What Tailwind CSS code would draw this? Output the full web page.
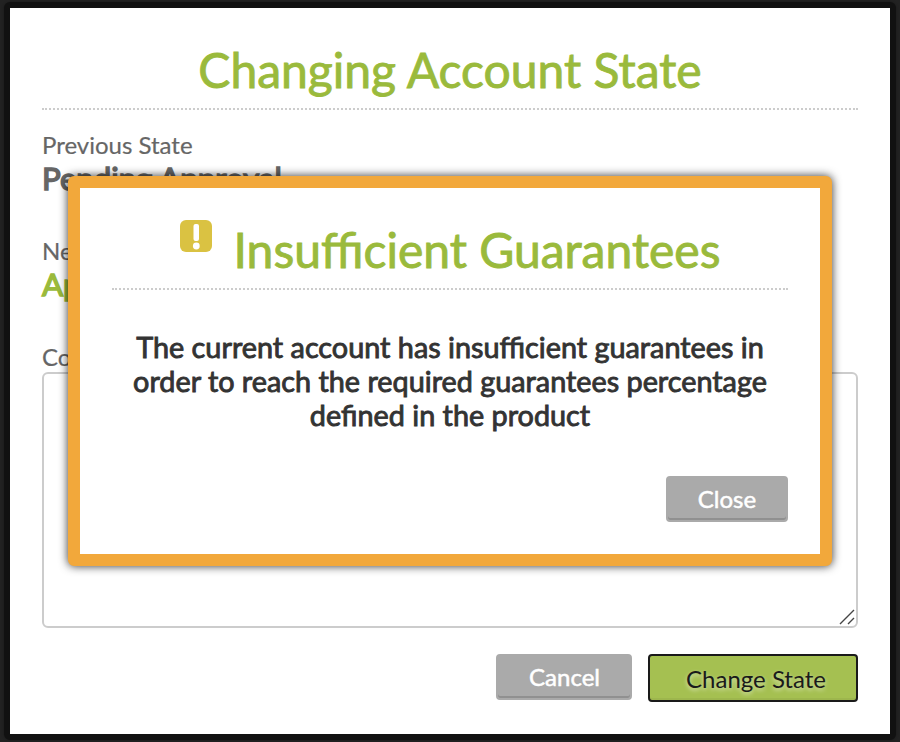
<!DOCTYPE html>
<html lang="en">
<head>
  <meta charset="UTF-8">
  <title>Changing Account State</title>
  <script src="https://cdn.jsdelivr.net/npm/@tailwindcss/browser@4"></script>
  <meta name="viewport" content="width=device-width, initial-scale=1.0">
</head>
<body class="bg-[#222] w-[900px] h-[742px] overflow-hidden px-1 py-0.5 font-['Lato',sans-serif] text-[#666]">

  <!-- account state form -->
  <div class="relative h-[738px] bg-white border-6 border-[#111] rounded-md shadow-[0_0_3px_rgba(0,0,0,0.3)] px-8 pt-8">
    <h1 class="h-[70px] border-b-2 border-dotted border-[#ccc] text-center text-5xl leading-[60px] text-[#9aba3c] [-webkit-text-stroke:0.9px_#9aba3c]">Changing Account State</h1>

    <div class="mt-[18px] text-2xl leading-[34px] [-webkit-text-stroke:0.2px_#666]">Previous State</div>
    <div class="text-[31.2px] leading-8 [-webkit-text-stroke:1.5px_#666]">Pending Approval</div>

    <div class="mt-10 text-2xl leading-[34px] [-webkit-text-stroke:0.2px_#666]">New State</div>
    <div class="text-[31.2px] leading-8 text-[#9aba3c] [-webkit-text-stroke:1.5px_#9aba3c]">Approved</div>

    <div class="mt-10 text-2xl leading-[34px] [-webkit-text-stroke:0.2px_#666]">Comment</div>
    <div class="relative -mt-0.5 h-64 border-2 border-[#ccc] rounded-md">
      <svg class="absolute right-px bottom-px w-4 h-4" viewBox="0 0 16 16" fill="none" stroke="#444" stroke-width="1.4">
        <path d="M1 15L15 1M9 15L15 9"/>
      </svg>
    </div>

    <div class="mt-[26px] flex justify-end gap-4">
      <button class="w-[136px] h-[46px] rounded bg-[#aaa] border-2 border-[#aaa] shadow-[inset_0_-2px_0_#909090] pl-px text-2xl leading-[42px] text-white [-webkit-text-stroke:0.5px_white]">Cancel</button>
      <button class="w-[210px] h-12 rounded bg-[#a5c051] border-2 border-[#1a1a1a] shadow-[inset_0_-2px_0_#9db64d] pl-1.5 text-2xl leading-[46px] text-[#1a1a1a] [text-shadow:0_2px_4px_rgba(255,255,255,0.6)]">Change State</button>
    </div>
  </div>

  <!-- warning dialog -->
  <div class="absolute left-[68px] top-[176px] w-[764px] h-[390px] bg-white border-12 border-[#f2a83b] rounded-md shadow-[0_0_10px_rgba(0,0,0,0.8)] px-8 pt-8">
    <div class="h-[70px] border-b-2 border-dotted border-[#ccc] flex justify-center">
      <svg class="w-8 h-8 mr-[22px]" viewBox="0 0 32 32">
        <rect width="32" height="32" rx="6" fill="#dac242"/>
        <rect x="13.5" y="4" width="5.5" height="17" rx="2" fill="#fff"/>
        <circle cx="16.3" cy="26" r="3.4" fill="#fff"/>
      </svg>
      <h2 class="text-5xl leading-[60px] text-[#9aba3c] [-webkit-text-stroke:0.9px_#9aba3c]">Insufficient Guarantees</h2>
    </div>
    <p class="mt-10 text-center text-[28.8px] leading-[34px] text-[#333] [-webkit-text-stroke:0.9px_#333]">The current account has insufficient guarantees in<br>order to reach the required guarantees percentage<br>defined in the product</p>
    <div class="mt-11 flex justify-end">
      <button class="w-[122px] h-[46px] rounded bg-[#aaa] border-2 border-[#aaa] shadow-[inset_0_-2px_0_#909090] text-2xl leading-[42px] text-white [-webkit-text-stroke:0.5px_white]">Close</button>
    </div>
  </div>

</body>
</html>
